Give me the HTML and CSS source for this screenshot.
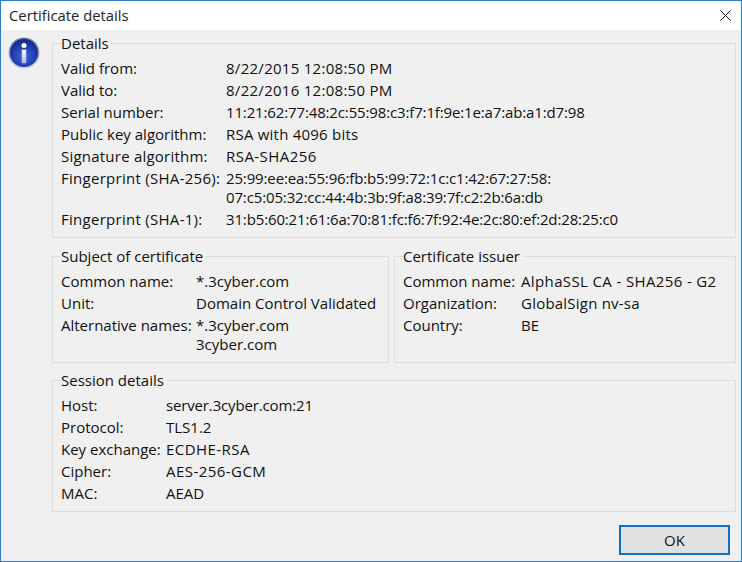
FILE: index.html
```html
<!DOCTYPE html>
<html lang="en">
<head>
    <meta charset="UTF-8">
    <title>Certificate details</title>
    <link rel="stylesheet" href="styles.css">
</head>
<body>

<div class="dialog">
    <div class="titlebar">
        <span class="title">Certificate details</span>
        <svg class="close" width="11" height="11" viewBox="0 0 11 11"><path d="M0.5 0.5L10.5 10.5M10.5 0.5L0.5 10.5" stroke="#111" stroke-width="1" fill="none"/></svg>
    </div>
    <div class="content">
        <svg class="info-icon" width="32" height="32" viewBox="0 0 32 32">
            <defs>
                <radialGradient id="orb" cx="50%" cy="62%" r="62%">
                    <stop offset="0" stop-color="#4468d4"/>
                    <stop offset="0.6" stop-color="#2040b4"/>
                    <stop offset="1" stop-color="#122480"/>
                </radialGradient>
                <linearGradient id="rim" x1="0" y1="0" x2="0" y2="1">
                    <stop offset="0" stop-color="#6f7a9c"/>
                    <stop offset="1" stop-color="#c4cce2"/>
                </linearGradient>
                <linearGradient id="glyph" x1="0" y1="0" x2="0" y2="1">
                    <stop offset="0" stop-color="#ffffff"/>
                    <stop offset="1" stop-color="#aebbe0"/>
                </linearGradient>
            </defs>
            <circle cx="16" cy="16" r="15.5" fill="url(#rim)"/>
            <circle cx="16" cy="16" r="14" fill="url(#orb)"/>
            <circle cx="16" cy="8.4" r="2.5" fill="#fff"/>
            <path d="M13.8 12.8h4.4v13.4h-4.4z" fill="url(#glyph)"/>
        </svg>
        <div class="panels">
            <fieldset class="group">
                <legend>Details</legend>
                <div class="rows details-rows">
                    <span>Valid from:</span><span class="date">8/22/2015 12:08:50 PM</span>
                    <span>Valid to:</span><span class="date">8/22/2016 12:08:50 PM</span>
                    <span>Serial number:</span><span class="hex">11:21:62:77:48:2c:55:98:c3:f7:1f:9e:1e:a7:ab:a1:d7:98</span>
                    <span>Public key algorithm:</span><span class="mid">RSA with 4096 bits</span>
                    <span class="mid">Signature algorithm:</span><span class="wide">RSA-SHA256</span>
                    <span class="fp">Fingerprint (SHA-256):</span><span class="hex">25:99:ee:ea:55:96:fb:b5:99:72:1c:c1:42:67:27:58:<br>07:c5:05:32:cc:44:4b:3b:9f:a8:39:7f:c2:2b:6a:db</span>
                    <span class="fp">Fingerprint (SHA-1):</span><span class="hex">31:b5:60:21:61:6a:70:81:fc:f6:7f:92:4e:2c:80:ef:2d:28:25:c0</span>
                </div>
            </fieldset>
            <div class="pair">
                <fieldset class="group subject">
                    <legend>Subject of certificate</legend>
                    <div class="rows subject-rows">
                        <span>Common name:</span><span>*.3cyber.com</span>
                        <span>Unit:</span><span>Domain Control Validated</span>
                        <span>Alternative names:</span><span>*.3cyber.com<br>3cyber.com</span>
                    </div>
                </fieldset>
                <fieldset class="group issuer">
                    <legend>Certificate issuer</legend>
                    <div class="rows issuer-rows">
                        <span>Common name:</span><span class="issuer-name">AlphaSSL CA - SHA256 - G2</span>
                        <span>Organization:</span><span class="mid">GlobalSign nv-sa</span>
                        <span>Country:</span><span>BE</span>
                    </div>
                </fieldset>
            </div>
            <fieldset class="group">
                <legend>Session details</legend>
                <div class="rows session-rows">
                    <span>Host:</span><span class="host">server.3cyber.com:21</span>
                    <span>Protocol:</span><span>TLS1.2</span>
                    <span>Key exchange:</span><span class="wide">ECDHE-RSA</span>
                    <span>Cipher:</span><span class="wide">AES-256-GCM</span>
                    <span>MAC:</span><span>AEAD</span>
                </div>
            </fieldset>
            <div class="actions">
                <button type="button" class="ok">OK</button>
            </div>
        </div>
    </div>
</div>

</body>
</html>
```

FILE: styles.css
```css
html, body {
    margin: 0;
    padding: 0;
    height: 100%;
}
body {
    font-family: 'Open Sans', 'Noto Sans', sans-serif;
    font-size: 15px;
    line-height: 19px;
    color: #111;
    background: #f0f0f0;
    overflow: hidden;
}
.dialog {
    box-sizing: border-box;
    height: 562px;
    border: 1px solid #2b7cc4;
    display: flex;
    flex-direction: column;
}
.titlebar {
    height: 29px;
    box-sizing: border-box;
    background: #fff;
    display: flex;
    align-items: center;
    justify-content: space-between;
    padding: 0 10px 1px 8px;
    flex: none;
}
.title {
    font-size: 14.8px;
    color: #222;
}
.content {
    flex: 1;
    display: flex;
    padding-left: 7px;
}
.info-icon {
    flex: none;
    margin-top: 7px;
}
.panels {
    flex: 1;
    padding: 4px 5px 0 12px;
    min-width: 0;
}
.group {
    margin: 0 0 9px 0;
    padding: 0 8px;
    border: 1px solid #dcdcdc;
    min-width: 0;
    box-sizing: border-box;
}
.group legend {
    padding: 0 3px 0 0;
    background: #f0f0f0;
}
.rows {
    display: grid;
    row-gap: 3px;
    padding-top: 6px;
    white-space: nowrap;
}
.date, .fp {
    letter-spacing: 0.28px;
}
.hex {
    letter-spacing: -0.14px;
}
.mid {
    letter-spacing: 0.22px;
}
.wide {
    letter-spacing: 0.45px;
}
.issuer-name {
    letter-spacing: 0.37px;
}
.host {
    letter-spacing: -0.15px;
}
.details-rows {
    grid-template-columns: 165px 1fr;
    padding-bottom: 8px;
}
.subject-rows {
    grid-template-columns: 135px 1fr;
}
.issuer-rows {
    grid-template-columns: 118px 1fr;
}
.session-rows {
    grid-template-columns: 105px 1fr;
    padding-bottom: 8px;
}
.pair {
    display: flex;
    gap: 5px;
    margin-bottom: -1px;
}
.subject {
    width: 337px;
    height: 116px;
    flex: none;
}
.issuer {
    flex: 1;
    height: 116px;
}
.actions {
    display: flex;
    justify-content: flex-end;
    margin-top: 13px;
    padding-right: 6px;
}
.ok {
    width: 111px;
    height: 30px;
    box-sizing: border-box;
    border: 2px solid #0f6fc0;
    background: #e1e1e1;
    font-family: inherit;
    font-size: 15px;
    color: #111;
    padding: 0;
}
```
